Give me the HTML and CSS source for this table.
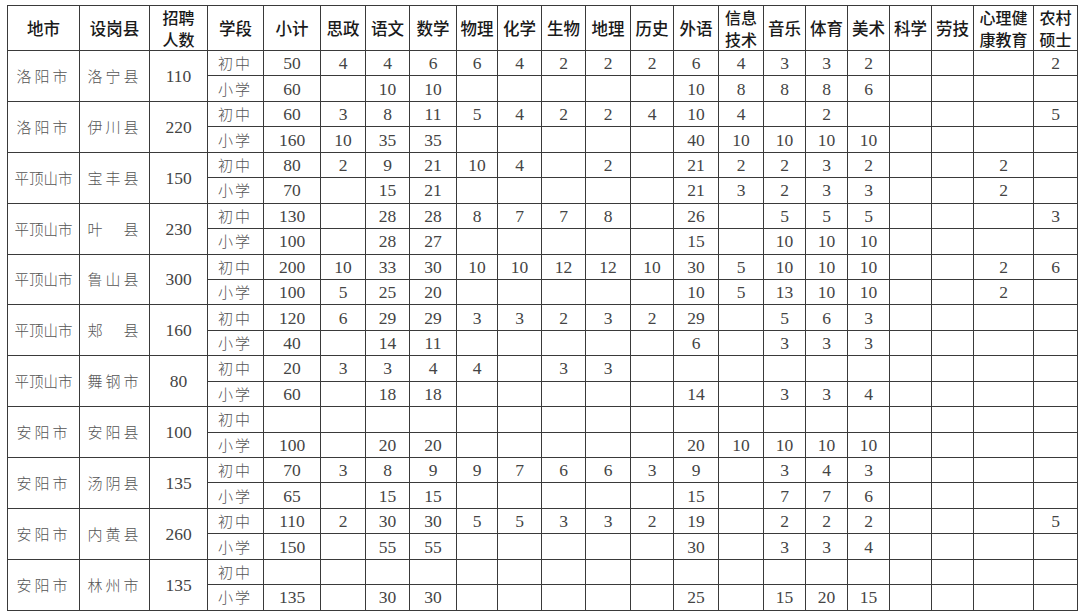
FILE: index.html
```html
<!DOCTYPE html>
<html lang="zh-CN">
<head>
<meta charset="utf-8">
<title>招聘计划表</title>
<link rel="stylesheet" href="styles.css">
</head>
<body>
<table class="plan">
<colgroup>
<col class="w72"><col class="w70"><col class="w58"><col class="w56"><col class="w57">
<col class="w45"><col class="w44"><col class="w47"><col class="w41"><col class="w44"><col class="w44"><col class="w45"><col class="w43"><col class="w45">
<col class="w45"><col class="w42"><col class="w42"><col class="w42"><col class="w42"><col class="w42"><col class="w60"><col class="w44">
</colgroup>
<thead>
<tr>
<th>地市</th><th>设岗县</th><th class="two">招聘<br>人数</th><th>学段</th><th>小计</th><th>思政</th><th>语文</th><th>数学</th><th>物理</th><th>化学</th><th>生物</th><th>地理</th><th>历史</th><th>外语</th><th class="two">信息<br>技术</th><th>音乐</th><th>体育</th><th>美术</th><th>科学</th><th>劳技</th><th class="two">心理健<br>康教育</th><th class="two">农村<br>硕士</th>
</tr>
</thead>
<tbody>
<tr><td rowspan="2" class="cn">洛阳市</td><td rowspan="2" class="cn">洛宁县</td><td rowspan="2">110</td><td class="cn stage">初中</td><td>50</td><td>4</td><td>4</td><td>6</td><td>6</td><td>4</td><td>2</td><td>2</td><td>2</td><td>6</td><td>4</td><td>3</td><td>3</td><td>2</td><td></td><td></td><td></td><td>2</td></tr>
<tr><td class="cn stage">小学</td><td>60</td><td></td><td>10</td><td>10</td><td></td><td></td><td></td><td></td><td></td><td>10</td><td>8</td><td>8</td><td>8</td><td>6</td><td></td><td></td><td></td><td></td></tr>

<tr><td rowspan="2" class="cn">洛阳市</td><td rowspan="2" class="cn">伊川县</td><td rowspan="2">220</td><td class="cn stage">初中</td><td>60</td><td>3</td><td>8</td><td>11</td><td>5</td><td>4</td><td>2</td><td>2</td><td>4</td><td>10</td><td>4</td><td></td><td>2</td><td></td><td></td><td></td><td></td><td>5</td></tr>
<tr><td class="cn stage">小学</td><td>160</td><td>10</td><td>35</td><td>35</td><td></td><td></td><td></td><td></td><td></td><td>40</td><td>10</td><td>10</td><td>10</td><td>10</td><td></td><td></td><td></td><td></td></tr>

<tr><td rowspan="2" class="cn tight">平顶山市</td><td rowspan="2" class="cn">宝丰县</td><td rowspan="2">150</td><td class="cn stage">初中</td><td>80</td><td>2</td><td>9</td><td>21</td><td>10</td><td>4</td><td></td><td>2</td><td></td><td>21</td><td>2</td><td>2</td><td>3</td><td>2</td><td></td><td></td><td>2</td><td></td></tr>
<tr><td class="cn stage">小学</td><td>70</td><td></td><td>15</td><td>21</td><td></td><td></td><td></td><td></td><td></td><td>21</td><td>3</td><td>2</td><td>3</td><td>3</td><td></td><td></td><td>2</td><td></td></tr>

<tr><td rowspan="2" class="cn tight">平顶山市</td><td rowspan="2" class="cn">叶　县</td><td rowspan="2">230</td><td class="cn stage">初中</td><td>130</td><td></td><td>28</td><td>28</td><td>8</td><td>7</td><td>7</td><td>8</td><td></td><td>26</td><td></td><td>5</td><td>5</td><td>5</td><td></td><td></td><td></td><td>3</td></tr>
<tr><td class="cn stage">小学</td><td>100</td><td></td><td>28</td><td>27</td><td></td><td></td><td></td><td></td><td></td><td>15</td><td></td><td>10</td><td>10</td><td>10</td><td></td><td></td><td></td><td></td></tr>

<tr><td rowspan="2" class="cn tight">平顶山市</td><td rowspan="2" class="cn">鲁山县</td><td rowspan="2">300</td><td class="cn stage">初中</td><td>200</td><td>10</td><td>33</td><td>30</td><td>10</td><td>10</td><td>12</td><td>12</td><td>10</td><td>30</td><td>5</td><td>10</td><td>10</td><td>10</td><td></td><td></td><td>2</td><td>6</td></tr>
<tr><td class="cn stage">小学</td><td>100</td><td>5</td><td>25</td><td>20</td><td></td><td></td><td></td><td></td><td></td><td>10</td><td>5</td><td>13</td><td>10</td><td>10</td><td></td><td></td><td>2</td><td></td></tr>

<tr><td rowspan="2" class="cn tight">平顶山市</td><td rowspan="2" class="cn">郏　县</td><td rowspan="2">160</td><td class="cn stage">初中</td><td>120</td><td>6</td><td>29</td><td>29</td><td>3</td><td>3</td><td>2</td><td>3</td><td>2</td><td>29</td><td></td><td>5</td><td>6</td><td>3</td><td></td><td></td><td></td><td></td></tr>
<tr><td class="cn stage">小学</td><td>40</td><td></td><td>14</td><td>11</td><td></td><td></td><td></td><td></td><td></td><td>6</td><td></td><td>3</td><td>3</td><td>3</td><td></td><td></td><td></td><td></td></tr>

<tr><td rowspan="2" class="cn tight">平顶山市</td><td rowspan="2" class="cn">舞钢市</td><td rowspan="2">80</td><td class="cn stage">初中</td><td>20</td><td>3</td><td>3</td><td>4</td><td>4</td><td></td><td>3</td><td>3</td><td></td><td></td><td></td><td></td><td></td><td></td><td></td><td></td><td></td><td></td></tr>
<tr><td class="cn stage">小学</td><td>60</td><td></td><td>18</td><td>18</td><td></td><td></td><td></td><td></td><td></td><td>14</td><td></td><td>3</td><td>3</td><td>4</td><td></td><td></td><td></td><td></td></tr>

<tr><td rowspan="2" class="cn">安阳市</td><td rowspan="2" class="cn">安阳县</td><td rowspan="2">100</td><td class="cn stage">初中</td><td></td><td></td><td></td><td></td><td></td><td></td><td></td><td></td><td></td><td></td><td></td><td></td><td></td><td></td><td></td><td></td><td></td><td></td></tr>
<tr><td class="cn stage">小学</td><td>100</td><td></td><td>20</td><td>20</td><td></td><td></td><td></td><td></td><td></td><td>20</td><td>10</td><td>10</td><td>10</td><td>10</td><td></td><td></td><td></td><td></td></tr>

<tr><td rowspan="2" class="cn">安阳市</td><td rowspan="2" class="cn">汤阴县</td><td rowspan="2">135</td><td class="cn stage">初中</td><td>70</td><td>3</td><td>8</td><td>9</td><td>9</td><td>7</td><td>6</td><td>6</td><td>3</td><td>9</td><td></td><td>3</td><td>4</td><td>3</td><td></td><td></td><td></td><td></td></tr>
<tr><td class="cn stage">小学</td><td>65</td><td></td><td>15</td><td>15</td><td></td><td></td><td></td><td></td><td></td><td>15</td><td></td><td>7</td><td>7</td><td>6</td><td></td><td></td><td></td><td></td></tr>

<tr><td rowspan="2" class="cn">安阳市</td><td rowspan="2" class="cn">内黄县</td><td rowspan="2">260</td><td class="cn stage">初中</td><td>110</td><td>2</td><td>30</td><td>30</td><td>5</td><td>5</td><td>3</td><td>3</td><td>2</td><td>19</td><td></td><td>2</td><td>2</td><td>2</td><td></td><td></td><td></td><td>5</td></tr>
<tr><td class="cn stage">小学</td><td>150</td><td></td><td>55</td><td>55</td><td></td><td></td><td></td><td></td><td></td><td>30</td><td></td><td>3</td><td>3</td><td>4</td><td></td><td></td><td></td><td></td></tr>

<tr><td rowspan="2" class="cn">安阳市</td><td rowspan="2" class="cn">林州市</td><td rowspan="2">135</td><td class="cn stage">初中</td><td></td><td></td><td></td><td></td><td></td><td></td><td></td><td></td><td></td><td></td><td></td><td></td><td></td><td></td><td></td><td></td><td></td><td></td></tr>
<tr><td class="cn stage">小学</td><td>135</td><td></td><td>30</td><td>30</td><td></td><td></td><td></td><td></td><td></td><td>25</td><td></td><td>15</td><td>20</td><td>15</td><td></td><td></td><td></td><td></td></tr>
</tbody>
</table>
</body>
</html>
```
FILE: styles.css
```css
html, body {
  margin: 0;
  padding: 0;
  background: #ffffff;
}
body {
  padding: 5px 0 0 7px;
}
.plan {
  border-collapse: collapse;
  table-layout: fixed;
  width: 1070px;
  font-family: "Liberation Serif", "Noto Sans CJK SC", serif;
  color: #444444;
}
.w72 { width: 72px; }
.w70 { width: 70px; }
.w58 { width: 58px; }
.w57 { width: 57px; }
.w56 { width: 56px; }
.w47 { width: 47px; }
.w45 { width: 45px; }
.w44 { width: 44px; }
.w43 { width: 43px; }
.w42 { width: 42px; }
.w41 { width: 41px; }
.w60 { width: 60px; }
.plan th, .plan td {
  border: 1px solid #3a3a3a;
  padding: 0;
  text-align: center;
  vertical-align: middle;
  overflow: hidden;
  white-space: nowrap;
}
.plan th {
  height: 44px;
  font-family: "Noto Sans CJK SC", "Noto Sans", sans-serif;
  font-weight: 500;
  font-size: 16.5px;
  line-height: 22px;
  color: #1a1a1a;
}
.plan th.two {
  font-size: 16px;
  line-height: 22px;
}
.plan tbody tr {
  height: 25.45px;
}
.plan td {
  font-size: 17.5px;
  line-height: 20px;
}
.plan td.cn {
  font-family: "Noto Sans CJK SC", sans-serif;
  font-weight: 300;
  font-size: 15px;
  letter-spacing: 3px;
  color: #555555;
}
.plan td.cn.tight {
  letter-spacing: 0;
  font-size: 14.5px;
}
.plan td.stage {
  letter-spacing: 2px;
  text-align: left;
  padding-left: 10px;
}
```
